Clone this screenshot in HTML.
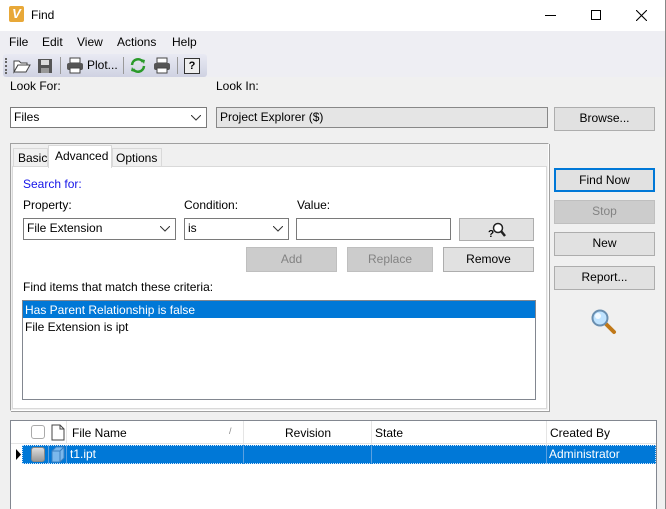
<!DOCTYPE html>
<html><head><meta charset="utf-8"><style>
*{box-sizing:border-box;margin:0;padding:0}
body{width:666px;height:509px;overflow:hidden;background:#f0f0f0;font-family:"Liberation Sans",sans-serif;font-size:12px;color:#000;position:relative}
.a{position:absolute;white-space:nowrap}
.btn{position:absolute;background:#e1e1e1;border:1px solid #adadad;text-align:center;line-height:21px}
.dis{background:#cccccc;border-color:#bfbfbf;color:#838383}
.cb{position:absolute;background:#fff;border:1px solid #7a7a7a;padding-left:3px;line-height:19px}
.cb svg{position:absolute;right:5px;top:7px}
</style></head><body>
<div class="a" style="left:0;top:0;width:666px;height:31px;background:#fff"></div>
<div class="a" style="left:9px;top:6px;width:15px;height:16px;background:#e8a838;border-radius:2px;color:#fff;font-weight:bold;font-size:13px;text-align:center;line-height:16px;font-style:italic">V</div>
<div class="a" style="left:31px;top:8px;font-size:12px">Find</div>
<div class="a" style="left:545px;top:15px;width:11px;height:1px;background:#000"></div>
<div class="a" style="left:591px;top:10px;width:10px;height:10px;border:1px solid #000"></div>
<svg class="a" style="left:636px;top:10px" width="11" height="11"><path d="M0 0L11 11M11 0L0 11" stroke="#000" stroke-width="1.1"/></svg>
<div class="a" style="left:0;top:31px;width:665px;height:46px;background:#eeeef3"></div>
<div class="a" style="left:9px;top:35px">File</div>
<div class="a" style="left:42px;top:35px">Edit</div>
<div class="a" style="left:77px;top:35px">View</div>
<div class="a" style="left:117px;top:35px">Actions</div>
<div class="a" style="left:172px;top:35px">Help</div>
<div class="a" style="left:3px;top:54px;width:204px;height:23px;background:linear-gradient(#e9eaf3,#cfd2e2);border-radius:3px"></div>
<div class="a" style="left:5px;top:58px;width:2px;height:16px;border-left:2px dotted #666"></div>
<svg class="a" style="left:13px;top:58px" width="18" height="16"><path d="M1 3h5l2 2h6v2H5L1 14z" fill="#fff" stroke="#444"/><path d="M1 14L5 7h12l-4 7z" fill="#fff" stroke="#444"/></svg>
<svg class="a" style="left:37px;top:58px" width="16" height="16"><rect x="1" y="1" width="14" height="14" fill="#555"/><rect x="4" y="2" width="8" height="5" fill="#ddd"/><rect x="4" y="10" width="8" height="5" fill="#999"/></svg>
<div class="a" style="left:60px;top:57px;width:1px;height:17px;background:#999"></div>
<svg class="a" style="left:66px;top:57px" width="18" height="17"><rect x="4" y="1" width="10" height="5" fill="#fff" stroke="#444"/><rect x="1" y="6" width="16" height="7" rx="2" fill="#555"/><rect x="4" y="11" width="10" height="5" fill="#fff" stroke="#444"/></svg>
<div class="a" style="left:87px;top:58px">Plot...</div>
<div class="a" style="left:123px;top:57px;width:1px;height:17px;background:#999"></div>
<svg class="a" style="left:129px;top:57px" width="18" height="17"><path d="M3 8a6 6 0 0 1 11-3M15 9a6 6 0 0 1-11 3" fill="none" stroke="#2a9a2a" stroke-width="2.5"/><path d="M12 2l4 1-1 4zM6 15l-4-1 1-4z" fill="#2a9a2a"/></svg>
<svg class="a" style="left:153px;top:57px" width="18" height="17"><rect x="4" y="1" width="10" height="5" fill="#fff" stroke="#444"/><rect x="1" y="6" width="16" height="7" rx="2" fill="#555"/><rect x="4" y="11" width="10" height="5" fill="#fff" stroke="#444"/></svg>
<div class="a" style="left:177px;top:57px;width:1px;height:17px;background:#999"></div>
<div class="a" style="left:184px;top:58px;width:16px;height:16px;border:1px solid #333;background:#eee;font-weight:bold;font-size:11px;text-align:center;line-height:14px">?</div>
<div class="a" style="left:665px;top:0;width:1px;height:509px;background:#888"></div>

<div class="a" style="left:10px;top:79px">Look For:</div>
<div class="a" style="left:216px;top:79px">Look In:</div>
<div class="cb" style="left:10px;top:107px;width:197px;height:21px">Files<svg width="10" height="6"><path d="M0 0l5 5 5-5" fill="none" stroke="#333"/></svg></div>
<div class="cb" style="left:216px;top:107px;width:332px;height:21px;background:#e5e5e5;border-color:#888">Project Explorer ($)</div>
<div class="btn" style="left:554px;top:107px;width:101px;height:24px">Browse...</div>

<div class="a" style="left:10px;top:143px;width:539px;height:268px;border:1px solid;border-color:#a0a0a0 #fff #fff #a0a0a0;background:#f0f0f0;box-shadow:1px 1px 0 #a0a0a0"></div>
<div class="a" style="left:12px;top:166px;width:535px;height:243px;background:#fff;border:1px solid #d9d9d9"></div>
<div class="a" style="left:13px;top:148px;width:35px;height:19px;background:#f0f0f0;border:1px solid #d9d9d9;padding:2px 0 0 4px">Basic</div>
<div class="a" style="left:48px;top:145px;width:64px;height:23px;background:#fff;border:1px solid #d9d9d9;border-bottom:none;padding:3px 0 0 6px">Advanced</div>
<div class="a" style="left:112px;top:148px;width:50px;height:19px;background:#f0f0f0;border:1px solid #d9d9d9;padding:2px 0 0 3px">Options</div>

<div class="a" style="left:23px;top:177px;color:#1515e8">Search for:</div>
<div class="a" style="left:23px;top:198px">Property:</div>
<div class="a" style="left:184px;top:198px">Condition:</div>
<div class="a" style="left:297px;top:198px">Value:</div>
<div class="cb" style="left:23px;top:218px;width:153px;height:22px">File Extension<svg width="10" height="6"><path d="M0 0l5 5 5-5" fill="none" stroke="#333"/></svg></div>
<div class="cb" style="left:184px;top:218px;width:105px;height:22px">is<svg width="10" height="6"><path d="M0 0l5 5 5-5" fill="none" stroke="#333"/></svg></div>
<div class="cb" style="left:296px;top:218px;width:155px;height:22px"></div>
<div class="btn" style="left:459px;top:218px;width:75px;height:23px"><svg style="margin-top:3px" width="18" height="16"><circle cx="10" cy="6" r="4.5" fill="#fff" stroke="#222" stroke-width="1.5"/><path d="M13 9l4 5" stroke="#222" stroke-width="2.5"/><text x="0" y="15" font-size="10" font-weight="bold" font-family="Liberation Sans">?</text></svg></div>
<div class="btn dis" style="left:246px;top:247px;width:91px;height:25px;line-height:23px">Add</div>
<div class="btn dis" style="left:347px;top:247px;width:86px;height:25px;line-height:23px">Replace</div>
<div class="btn" style="left:443px;top:247px;width:91px;height:25px;line-height:23px">Remove</div>
<div class="a" style="left:23px;top:280px">Find items that match these criteria:</div>
<div class="a" style="left:22px;top:300px;width:514px;height:100px;border:1px solid #828790;background:#fff"></div>
<div class="a" style="left:23px;top:301px;width:512px;height:17px;background:#0078d7;color:#fff;padding:2px 0 0 2px">Has Parent Relationship is false</div>
<div class="a" style="left:25px;top:320px">File Extension is ipt</div>

<div class="btn" style="left:554px;top:168px;width:101px;height:24px;border:2px solid #0078d7;line-height:20px">Find Now</div>
<div class="btn dis" style="left:554px;top:200px;width:101px;height:24px">Stop</div>
<div class="btn" style="left:554px;top:232px;width:101px;height:24px">New</div>
<div class="btn" style="left:554px;top:266px;width:101px;height:24px">Report...</div>
<svg class="a" style="left:590px;top:308px" width="28" height="28"><path d="M14 14l10 10" stroke="#c07818" stroke-width="4" stroke-linecap="round"/><circle cx="10" cy="10" r="7.5" fill="#bfe3ff" stroke="#6a8fb0" stroke-width="2"/><circle cx="8" cy="8" r="3" fill="#fff" opacity=".8"/></svg>

<div class="a" style="left:10px;top:420px;width:647px;height:89px;border:1px solid #828790;border-bottom:none;background:#fff"></div>
<div class="a" style="left:11px;top:421px;width:645px;height:23px;background:#fff;border-bottom:1px solid #e5e5e5"></div>
<div class="a" style="left:31px;top:425px;width:14px;height:14px;border:1px solid #aaa;border-radius:3px"></div>
<svg class="a" style="left:51px;top:424px" width="14" height="17"><path d="M1 1h8l4 4v11H1z" fill="#fff" stroke="#444"/><path d="M9 1v4h4" fill="none" stroke="#444"/></svg>
<div class="a" style="left:66px;top:421px;width:1px;height:23px;background:#e5e5e5"></div>
<div class="a" style="left:72px;top:426px">File Name</div>
<div class="a" style="left:229px;top:426px;color:#888;font-size:9px">/</div>
<div class="a" style="left:243px;top:421px;width:1px;height:42px;background:#e5e5e5"></div>
<div class="a" style="left:285px;top:426px">Revision</div>
<div class="a" style="left:371px;top:421px;width:1px;height:42px;background:#e5e5e5"></div>
<div class="a" style="left:375px;top:426px">State</div>
<div class="a" style="left:546px;top:421px;width:1px;height:42px;background:#e5e5e5"></div>
<div class="a" style="left:550px;top:426px">Created By</div>
<div class="a" style="left:22px;top:445px;width:634px;height:19px;background:#0078d7;border:1px dotted #cfe6ff"></div>
<div class="a" style="left:48px;top:445px;width:1px;height:19px;background:#5aa0e0"></div>
<div class="a" style="left:66px;top:445px;width:1px;height:19px;background:#5aa0e0"></div>
<div class="a" style="left:243px;top:445px;width:1px;height:19px;background:#5aa0e0"></div>
<div class="a" style="left:371px;top:445px;width:1px;height:19px;background:#5aa0e0"></div>
<div class="a" style="left:546px;top:445px;width:1px;height:19px;background:#5aa0e0"></div>
<svg class="a" style="left:16px;top:449px" width="6" height="11"><path d="M0 0l5 5.5L0 11z" fill="#000"/></svg>
<div class="a" style="left:31px;top:447px;width:14px;height:15px;border-radius:3px;background:linear-gradient(#ddd,#999);border:1px solid #888"></div>
<svg class="a" style="left:50px;top:446px" width="15" height="17"><path d="M2 5l4-4h8v11l-4 4H2z" fill="#7bb8ec" stroke="#3b7fc0"/><path d="M2 5h8l4-4M10 5v11" fill="none" stroke="#3b7fc0"/></svg>
<div class="a" style="left:70px;top:447px;color:#fff">t1.ipt</div>
<div class="a" style="left:549px;top:447px;color:#fff">Administrator</div>
</body></html>
